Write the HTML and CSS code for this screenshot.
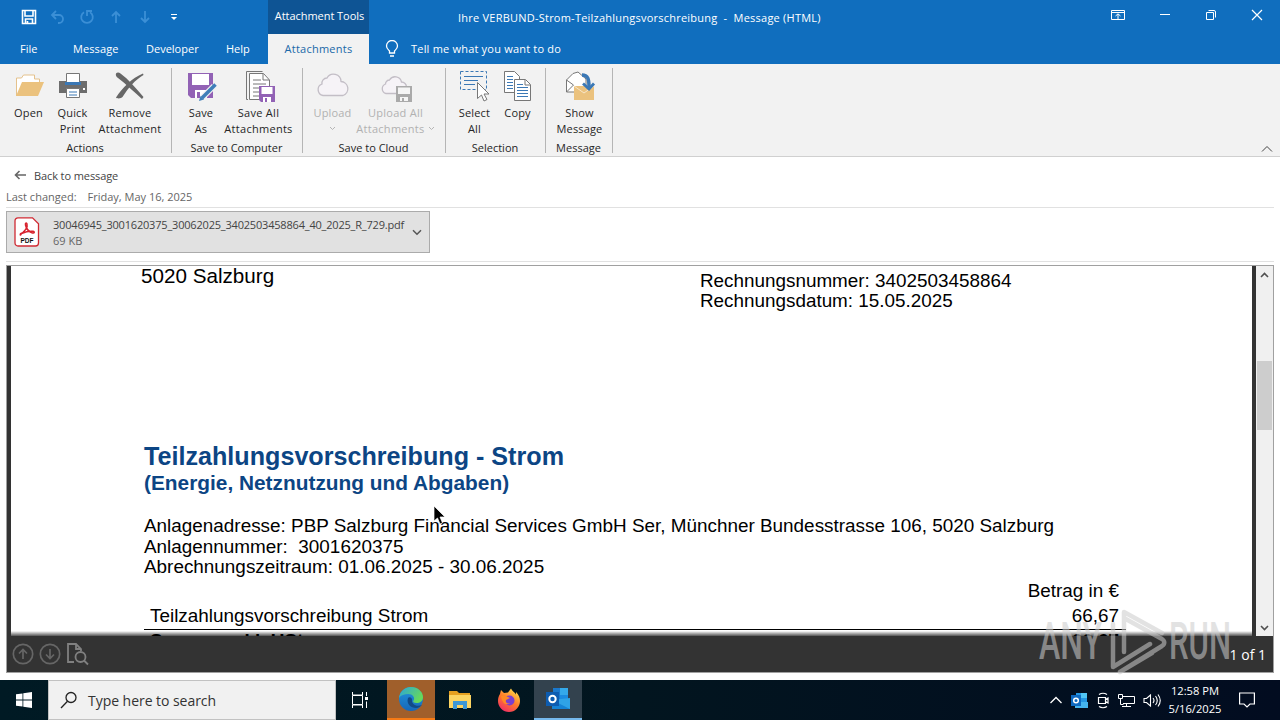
FILE: index.html
```html
<!DOCTYPE html>
<html lang="en">
<head>
    <meta charset="UTF-8">
    <meta name="viewport" content="width=device-width, initial-scale=1.0">
    <title>Ihre VERBUND-Strom-Teilzahlungsvorschreibung - Message (HTML)</title>
    <link rel="stylesheet" href="styles.css">
</head>
<body>
    <!-- Title bar and tabs -->
    <header class="top">
        <div class="top-left">
            <div class="quick-access">
                <svg width="16" height="16" viewBox="0 0 16 16"><path d="M1.5 1.5h13v13h-13zM4 2v5h8V2M4.5 14v-4h7v4M6.5 12v2" fill="none" stroke="#fff" stroke-width="1.6"/></svg>
                <svg width="16" height="16" viewBox="0 0 16 16"><path d="M6 2L2 6l4 4M2 6h7a4 4 0 0 1 0 8H8" fill="none" stroke="#3b8fd6" stroke-width="1.8"/></svg>
                <svg width="16" height="16" viewBox="0 0 16 16"><path d="M5 3.2a5.800 5.800 0 1 0 6 0M8 7V2h5" fill="none" stroke="#3b8fd6" stroke-width="1.8"/></svg>
                <svg width="16" height="16" viewBox="0 0 16 16"><path d="M8 14V3M4 7l4-4 4 4" fill="none" stroke="#3b8fd6" stroke-width="1.8"/></svg>
                <svg width="16" height="16" viewBox="0 0 16 16"><path d="M8 2v11M4 9l4 4 4-4" fill="none" stroke="#3b8fd6" stroke-width="1.8"/></svg>
                <svg width="16" height="16" viewBox="0 0 16 16"><path d="M5 5.500h6" stroke="#fff"/><path d="M5 8h6l-3 3z" fill="#fff"/></svg>
            </div>
            <nav class="tabs">
                <span class="tab tab-file">File</span>
                <span class="tab tab-message">Message</span>
                <span class="tab tab-developer">Developer</span>
                <span class="tab tab-help">Help</span>
            </nav>
        </div>
        <div class="context">
            <div class="context-title">Attachment Tools</div>
            <div class="context-tab">Attachments</div>
        </div>
        <div class="top-right">
            <div class="title-row">
                <h1 class="window-title">Ihre VERBUND-Strom-Teilzahlungsvorschreibung&nbsp; -&nbsp; Message (HTML)</h1>
                <div class="window-buttons">
                    <svg width="14" height="12" viewBox="0 0 14 12"><path d="M.5 1.500h13v9H.5zM.5 3.500h13M7 10V5M4.500 7L7 4.800 9.500 7" fill="none" stroke="#fff"/></svg>
                    <svg width="12" height="12" viewBox="0 0 12 12"><path d="M1 5.500h10" stroke="#fff"/></svg>
                    <svg width="12" height="12" viewBox="0 0 12 12"><path d="M1.500 3.500h7v7h-7zM3.500 1.500h5.500a1.500 1.500 0 0 1 1.500 1.500v5.500" fill="none" stroke="#fff"/></svg>
                    <svg width="12" height="12" viewBox="0 0 12 12"><path d="M1 1l10 10M11 1L1 11" stroke="#fff" stroke-width="1.200"/></svg>
                </div>
            </div>
            <div class="tell-me">
                <svg width="14" height="18" viewBox="0 0 14 18"><path d="M4.500 13v-2C3 9.500 1.500 8.500 1.500 6a5.500 5.500 0 0 1 11 0c0 2.500-1.500 3.500-3 5v2zM5 16h4" fill="none" stroke="#fff" stroke-width="1.300"/></svg>
                <span>Tell me what you want to do</span>
            </div>
        </div>
    </header>

    <!-- Ribbon -->
    <section class="ribbon">
        <div class="group g-actions">
            <div class="group-buttons">
                <div class="btn">
                    <svg width="32" height="36" viewBox="0 0 32 36"><path d="M3.500 28V10h5l2-3h11v4h5v4" fill="#fff" stroke="#e5c28c"/><path d="M3 28l6-14h22l-6 14z" fill="#ebc27e"/></svg>
                    <span>Open</span>
                </div>
                <div class="btn">
                    <svg width="32" height="36" viewBox="0 0 32 36"><path d="M2 13h28v12H2z" fill="#6d6d6d"/><path d="M9.500 5.500h13v9h-13z" fill="#fff" stroke="#777"/><path d="M8 14h16v3H8z" fill="#3b78b5"/><path d="M9.500 20.500h13v9h-13z" fill="#fff" stroke="#777"/><path d="M12 24h8M12 27h8" stroke="#3b78b5"/><path d="M26 21h2" stroke="#fff" stroke-width="2"/></svg>
                    <span>Quick<br>Print</span>
                </div>
                <div class="btn wide">
                    <svg width="32" height="36" viewBox="0 0 32 36"><path d="M2 5.500C3 4 5 4 6.500 5.500c8 6 15 14 23 23.500l-1.500 2C20 24 12 16 4 10 2 8.500 1.500 7 2 5.500z" fill="#676767"/><path d="M29.500 7C21 12 15 19 8.500 29c-1 1.500-5.500 2-6.500.5C8 20 18 10 29 5.500z" fill="#676767"/></svg>
                    <span>Remove<br>Attachment</span>
                </div>
            </div>
            <div class="group-label">Actions</div>
        </div>
        <div class="group g-computer">
            <div class="group-buttons">
                <div class="btn">
                    <svg width="32" height="36" viewBox="0 0 32 36"><path d="M3 5h25v25H6l-3-3z" fill="#9262b5"/><path d="M7 6h17v11H7zM10 22h12v8H10z" fill="#fff"/><path d="M12 24h3v6h-3z" fill="#9262b5"/><path d="M17 30l12-12" stroke="#f2f2f2" stroke-width="6"/><path d="M17 30l13.500-13.500" stroke="#3f7fb9" stroke-width="3.500"/><path d="M14 33l1.500-5 3.500 3.500z" fill="#3f7fb9"/></svg>
                    <span>Save<br>As</span>
                </div>
                <div class="btn wide">
                    <svg width="32" height="36" viewBox="0 0 32 36"><path d="M5 31.500H3.500v-28h16" fill="none" stroke="#777"/><path d="M6.500 5.500v26h20V12l-6-6.500h-14zM20 6v6h6" fill="#fff" stroke="#777"/><path d="M10 12h8M10 16h13M10 20h6M10 24h6M10 28h6" stroke="#777"/><path d="M16 18h16v16H18l-2-2z" fill="#9262b5"/><path d="M18.500 19h11v7h-11zM20 29h8v5h-8z" fill="#fff"/><path d="M22 30h2v4h-2z" fill="#9262b5"/></svg>
                    <span>Save All<br>Attachments</span>
                </div>
            </div>
            <div class="group-label">Save to Computer</div>
        </div>
        <div class="group g-cloud">
            <div class="group-buttons">
                <div class="btn off">
                    <svg width="32" height="36" viewBox="0 0 32 36"><path d="M6 27.500a6 6 0 0 1-1-11.500 5 5 0 0 1 5-6 7.500 7.500 0 0 1 14 3.500 7.200 7.200 0 0 1 2 14z" fill="#f6f3f7" stroke="#c3bec6" stroke-width="1.300"/></svg>
                    <span>Upload<br><svg class="caret" width="7" height="5" viewBox="0 0 7 5"><path d="M1 1l2.500 2.500L6 1" fill="none" stroke="#b5b5b5"/></svg></span>
                </div>
                <div class="btn wide off">
                    <svg width="32" height="36" viewBox="0 0 32 36"><path d="M6 25.500a5 5 0 0 1-.5-9.500 4 4 0 0 1 4-4 6.500 6.500 0 0 1 12 2 5 5 0 0 1 5 5v6.500z" fill="#f6f3f7" stroke="#c3bec6" stroke-width="1.300"/><path d="M16 18h16v16H16z" fill="#aaa"/><path d="M18 19.500h12V26H18zM20 29h8v4h-8z" fill="#f5f5f5"/><path d="M22 30h2v3h-2z" fill="#aaa"/></svg>
                    <span>Upload All<br>Attachments <svg class="caret" width="7" height="5" viewBox="0 0 7 5"><path d="M1 1l2.500 2.500L6 1" fill="none" stroke="#b5b5b5"/></svg></span>
                </div>
            </div>
            <div class="group-label">Save to Cloud</div>
        </div>
        <div class="group g-selection">
            <div class="group-buttons">
                <div class="btn">
                    <svg width="32" height="36" viewBox="0 0 32 36"><path d="M1.500 3.500h26v18h-26z" fill="none" stroke="#3b78b5" stroke-dasharray="3 2"/><path d="M5 8.500h19M5 12.500h14M5 16.500h11" stroke="#3b78b5"/><path d="M18.500 14.500v16l4-3.500 2.500 6 3-1.500-3-5.500h5z" fill="#fff" stroke="#777"/></svg>
                    <span>Select<br>All</span>
                </div>
                <div class="btn">
                    <svg width="32" height="36" viewBox="0 0 32 36"><g fill="#fff" stroke="#777"><path d="M2.500 3.500h10l5 5v16h-15z"/><path d="M12.500 11.500h11l5 5v16h-16z"/><path d="M23 12v5h5" fill="none"/></g><path d="M5 8.500h6M5 11.500h6M5 14.500h6M5 17.500h6M5 20.500h6M15 16.500h6M15 19.500h11M15 22.500h11M15 25.500h11M15 28.500h11" stroke="#3b78b5"/></svg>
                    <span>Copy</span>
                </div>
            </div>
            <div class="group-label">Selection</div>
        </div>
        <div class="group g-message">
            <div class="group-buttons">
                <div class="btn">
                    <svg width="32" height="36" viewBox="0 0 32 36"><path d="M2.500 24V12L9 5.500l5-1.500 8 7v13z" fill="#fff" stroke="#777"/><path d="M2.500 12l7 5M2.500 24l7-7" fill="none" stroke="#777"/><path d="M10 18h20v14H10z" fill="#ebc27e"/><path d="M10 18l10 7 10-7" fill="none" stroke="#f8e7c9"/><path d="M18 7c6 0 7 4 7 12" fill="none" stroke="#3b78b5" stroke-width="3.500"/><path d="M19 15.500l6 5.500 5-5.500" fill="none" stroke="#3b78b5" stroke-width="2.800"/></svg>
                    <span>Show<br>Message</span>
                </div>
            </div>
            <div class="group-label">Message</div>
        </div>
        <svg class="collapse" width="12" height="8" viewBox="0 0 12 8"><path d="M1 6.500l5-5 5 5" fill="none" stroke="#444"/></svg>
    </section>

    <!-- Attachment info -->
    <section class="info">
        <div class="back">
            <svg width="13" height="10" viewBox="0 0 13 10"><path d="M1.500 5H12M5.500 1l-4 4 4 4" fill="none" stroke="#666" stroke-width="1.600"/></svg>
            <span>Back to message</span>
        </div>
        <div class="changed"><span>Last changed:</span><span>Friday, May 16, 2025</span></div>
        <div class="chip-row">
            <div class="chip">
                <svg width="26" height="30" viewBox="0 0 26 30"><path d="M4 .8h14.500l6 6V26a3 3 0 0 1-3 3H4a3 3 0 0 1-3-3V4a3 3 0 0 1 3-3.200z" fill="#fff" stroke="#cf2a33" stroke-width="1.300"/><path d="M6 17c5-2 8-7 7-10-.6-1.600-2-1-1.500 1 .8 4 4 7 7 8 2 .5 2.500-1.500.5-1.700-4-.4-8 .7-11.500 2.200-2 1-1.500 2 0 1" fill="none" stroke="#d8232e" stroke-width="1.500"/><text x="13" y="26" class="pdf-tag">PDF</text></svg>
                <div class="chip-text">
                    <div class="file-name">30046945_3001620375_30062025_3402503458864_40_2025_R_729.pdf</div>
                    <div class="file-size">69 KB</div>
                </div>
                <svg width="10" height="7" viewBox="0 0 10 7"><path d="M1 1.200l4 4 4-4" fill="none" stroke="#555" stroke-width="1.500"/></svg>
            </div>
        </div>
    </section>

    <!-- PDF preview -->
    <main class="viewer">
        <div class="viewer-main">
            <article class="page">
                <div class="page-head">
                    <p class="city">5020 Salzburg</p>
                    <p class="invoice">Rechnungsnummer: 3402503458864<br>Rechnungsdatum: 15.05.2025</p>
                </div>
                <h2>Teilzahlungsvorschreibung - Strom</h2>
                <h3>(Energie, Netznutzung und Abgaben)</h3>
                <p class="details">Anlagenadresse: PBP Salzburg Financial Services GmbH Ser, Münchner Bundesstrasse 106, 5020 Salzburg<br>Anlagennummer:&nbsp; 3001620375<br>Abrechnungszeitraum: 01.06.2025 - 30.06.2025</p>
                <div class="sums">
                    <div class="sum-row sum-head"><span></span><span>Betrag in €</span></div>
                    <div class="sum-row"><span>Teilzahlungsvorschreibung Strom</span><span>66,67</span></div>
                    <div class="sum-row total"><span>Summe exkl. USt</span><span>66,67</span></div>
                </div>
            </article>
            <div class="scrollbar">
                <svg width="9" height="6" viewBox="0 0 9 6"><path d="M1 5l3.500-3.500L8 5" fill="none" stroke="#505050" stroke-width="1.600"/></svg>
                <div class="thumb"></div>
                <svg width="9" height="6" viewBox="0 0 9 6"><path d="M1 1l3.500 3.500L8 1" fill="none" stroke="#505050" stroke-width="1.600"/></svg>
            </div>
        </div>
        <div class="viewer-bar">
            <svg width="22" height="22" viewBox="0 0 22 22"><g fill="none" stroke="#666" stroke-width="1.700"><circle cx="11" cy="11" r="9.700"/><path d="M11 16V6.500M7 10.500l4-4 4 4"/></g></svg>
            <svg width="22" height="22" viewBox="0 0 22 22"><g fill="none" stroke="#666" stroke-width="1.700"><circle cx="11" cy="11" r="9.700"/><path d="M11 6v9.500M7 11.500l4 4 4-4"/></g></svg>
            <svg width="24" height="24" viewBox="0 0 24 24"><g fill="none" stroke="#808080" stroke-width="1.800"><path d="M8 20H2V2h8l5 5v2M10 2v5h5"/><circle cx="14.500" cy="15" r="5"/><path d="M18 18.500l4 4"/></g></svg>
            <span class="page-count">1 of 1</span>
        </div>
    </main>

    <!-- Taskbar -->
    <footer class="taskbar">
        <div class="start">
            <svg width="16" height="16" viewBox="0 0 16 16"><path d="M0 2.300l6.500-.9v6.100H0zM7.300 1.300L16 0v7.500H7.300zM0 8.400h6.500v6.200L0 13.700zM7.300 8.400H16V16l-8.700-1.300z" fill="#fff"/></svg>
        </div>
        <div class="search">
            <svg width="18" height="18" viewBox="0 0 18 18"><g fill="none" stroke="#222" stroke-width="1.300"><circle cx="11" cy="6.500" r="5"/><path d="M7.500 10.200L1 17"/></g></svg>
            <span>Type here to search</span>
        </div>
        <div class="task task-view">
            <svg width="18" height="18" viewBox="0 0 18 18"><path d="M2.500 1v3h10V1M2.500 17v-3h10v3M2.500 4.500h10v9h-10zM16.500 1v4M16.500 10.500V17" fill="none" stroke="#fff"/><path d="M15 6h3v3h-3z" fill="#fff"/></svg>
        </div>
        <div class="task edge">
            <svg width="26" height="26" viewBox="0 0 26 26">
                <defs>
                    <linearGradient id="edge-top" x1="0" y1="0" x2="1" y2="0.500"><stop offset="0" stop-color="#2aa5dc"/><stop offset="1" stop-color="#66d95a"/></linearGradient>
                    <linearGradient id="edge-side" x1="0" y1="0" x2="0" y2="1"><stop offset="0" stop-color="#2296dd"/><stop offset="1" stop-color="#1767b8"/></linearGradient>
                </defs>
                <circle cx="13" cy="13" r="12" fill="url(#edge-side)"/>
                <path d="M1 12C2 5 7 1 13 1c7 0 12 5 12 10 0 4-3 6-6.500 6-3 0-4-1.200-3-2.500 2-3-1-6.500-5-6.500C6 8 3 9 1 12z" fill="url(#edge-top)"/>
                <path d="M10 12c-2 6 3 10 8 10 3 0 4.500-1.500 6-3-5 2-11 0-10-6-1-2-3-2.500-4-1z" fill="#124a86"/>
            </svg>
        </div>
        <div class="task">
            <svg width="22" height="20" viewBox="0 0 22 20"><path d="M0 1h8l2 2h11v4H0z" fill="#e6a020"/><path d="M0 5h22v13H0z" fill="#fcd462"/><path d="M4 11h14v8h-4v-4H8v4H4z" fill="#3c97d6"/></svg>
        </div>
        <div class="task">
            <svg width="24" height="24" viewBox="0 0 24 24">
                <defs><linearGradient id="fox" x1="0.800" y1="0" x2="0.200" y2="1"><stop offset="0" stop-color="#ffe14a"/><stop offset="0.500" stop-color="#ff7a2a"/><stop offset="1" stop-color="#f0286a"/></linearGradient></defs>
                <path d="M3 6l1-4 3 3 4-.5L14 .5c1 3 4 3.500 5 6V4c3 3 4 6 4 9a11 11 0 0 1-22 0c0-3 .7-5 2-7z" fill="url(#fox)"/>
                <circle cx="12.500" cy="12.500" r="5" fill="#7a3fd0"/>
                <path d="M4 8c3-1 5 0 7 1l2 1-4 2c-1 3 2 4 4 3-3 3-8 1-9-7z" fill="#ff8a24"/>
            </svg>
        </div>
        <div class="task outlook">
            <svg width="26" height="24" viewBox="0 0 26 24"><path d="M8 1h15v14H8z" fill="#1a78cc"/><path d="M15 1h8v7h-8z" fill="#34a9ea"/><path d="M15 8h8v7h-8z" fill="#1b8be0"/><path d="M7 13l18-2v11H7z" fill="#2fa3e6"/><path d="M7 13l18 9H7z" fill="#1583d5"/><path d="M1 5h13v14H1z" fill="#0d5cb0"/><circle cx="7.500" cy="12" r="3.200" fill="none" stroke="#fff" stroke-width="2"/></svg>
        </div>
        <div class="tray">
            <svg width="14" height="8" viewBox="0 0 14 8"><path d="M1.500 7L7 1.500 12.500 7" fill="none" stroke="#fff" stroke-width="1.300"/></svg>
            <svg width="17" height="17" viewBox="0 0 17 17"><path d="M5 1h11v14H5z" fill="#2496e2"/><path d="M10 1h6v5h-6z" fill="#50c5f4"/><path d="M4 10h13v6H4z" fill="#45b4ee"/><path d="M0 3h10v11H0z" fill="#0f69bf"/><circle cx="5" cy="8.500" r="2.300" fill="none" stroke="#fff" stroke-width="1.500"/></svg>
            <svg width="14" height="17" viewBox="0 0 14 17"><path d="M2.500 5.500h7v6h-7zM9.500 7.500l2.500-1.500v5l-2.500-1.500M3 2.500q4-2.500 8 0M3 14.500q4 2.500 8 0" fill="none" stroke="#fff" stroke-width="1.200"/></svg>
            <svg width="17" height="15" viewBox="0 0 17 15"><path d="M5 3.500h11.500v7H5M4 13.500h9M8.500 10.500v3M.5 1.500h4v4h-4zM2.500 5.500v6h3" fill="none" stroke="#fff"/></svg>
            <svg width="18" height="15" viewBox="0 0 18 15"><path d="M1 5.500h2.500l4-3.500v11l-4-3.500H1zM10 5q2 2.500 0 5M12.500 3q3.500 4.500 0 9M15 1.500q4.500 6 0 12" fill="none" stroke="#fff" stroke-width="1.100"/></svg>
            <div class="clock">12:58 PM<br>5/16/2025</div>
            <svg class="notice" width="16" height="16" viewBox="0 0 16 16"><path d="M.6 1h14.800v11H11l-3 3-3-3H.6z" fill="none" stroke="#fff" stroke-width="1.200"/></svg>
        </div>
    </footer>

    <!-- Watermark over the viewer -->
    <svg class="watermark" width="200" height="70" viewBox="0 0 200 70">
        <text x="1" y="53" textLength="63" lengthAdjust="spacingAndGlyphs">ANY</text>
        <text x="131" y="53" textLength="62" lengthAdjust="spacingAndGlyphs">RUN</text>
        <path d="M86 46V6l38 21M75 18v43l37-23M75 61V18M86 26v20M82 66l42-26c3-2 3-5 0-7L86 12M82 66l32-19" fill="none" stroke="#ccc" stroke-width="4.500" stroke-linejoin="round" stroke-linecap="round"/>
    </svg>

    <!-- Mouse pointer -->
    <svg class="pointer" width="13" height="20" viewBox="0 0 13 20"><path d="M1 1v15l3.500-3 2.500 6 2.500-1-2.500-6h5z" fill="#000" stroke="#fff" stroke-width=".7"/></svg>
</body>
</html>
```
FILE: styles.css
```css
/* Global Styles */
* {
    box-sizing: border-box;
}

body {
    margin: 0;
    width: 1280px;
    height: 720px;
    overflow: hidden;
    position: relative;
    display: flex;
    flex-direction: column;
    background: #fff;
    color: #262626;
    font-family: 'Open Sans', sans-serif;
    font-size: 11px;
}

svg {
    display: block;
    flex-shrink: 0;
}

h1, h2, h3, p {
    margin: 0;
}

/* Title bar and tabs */
.top {
    display: flex;
    height: 64px;
    background: #106ebe;
    color: #fff;
}

.top-left {
    width: 268px;
}

.quick-access {
    display: flex;
    gap: 13px;
    height: 34px;
    padding-left: 21px;
    align-items: center;
}

.tabs {
    display: flex;
    height: 30px;
    line-height: 30px;
    padding-left: 20px;
}

.tab-file { width: 53px; }
.tab-message { width: 73px; letter-spacing: 0.1px; }
.tab-developer { width: 80px; }

.context {
    width: 101px;
    text-align: center;
}

.context-title {
    height: 34px;
    line-height: 32px;
    padding-left: 2px;
    background: #0e5494;
    letter-spacing: -0.05px;
    white-space: nowrap;
}

.context-tab {
    height: 30px;
    line-height: 30px;
    background: #f2f2f2;
    color: #2068a8;
    letter-spacing: 0.25px;
}

.top-right {
    flex: 1;
}

.title-row {
    display: flex;
    justify-content: space-between;
    height: 34px;
    padding: 0 17px 0 89px;
}

.window-title {
    font-size: 11px;
    font-weight: normal;
    letter-spacing: 0.23px;
    line-height: 36px;
}

.window-buttons {
    display: flex;
    gap: 34px;
    padding-top: 9px;
}

.tell-me {
    display: flex;
    align-items: center;
    gap: 12px;
    height: 29px;
    padding-left: 16px;
    letter-spacing: 0.2px;
}

/* Ribbon */
.ribbon {
    display: flex;
    height: 93px;
    background: #f2f2f2;
    border-bottom: 1px solid #d0d0d0;
    position: relative;
}

.group {
    height: 92px;
    padding-top: 4px;
    background: linear-gradient(#b5b5b5, #b5b5b5) right 4px / 1px 85px no-repeat;
}

.g-actions { width: 172px; }
.g-computer { width: 131px; }
.g-cloud { width: 143px; }
.g-selection { width: 100px; }
.g-message { width: 67px; }

.group-buttons {
    display: flex;
    justify-content: center;
    height: 72px;
    padding-right: 2px;
}

.g-actions .group-buttons,
.g-selection .group-buttons,
.g-message .group-buttons {
    padding-right: 0;
}

.btn {
    width: 44px;
    display: flex;
    flex-direction: column;
    align-items: center;
    line-height: 16px;
    text-align: center;
    white-space: nowrap;
}

.btn > span {
    padding-top: 1px;
    letter-spacing: 0.15px;
}

.btn.wide {
    width: 71px;
}

.btn.wide > span {
    letter-spacing: 0.28px;
}

.g-cloud .wide {
    width: 82px;
}

.g-selection .btn {
    width: 43px;
}

.off {
    color: #b1b1b1;
}

.caret {
    display: inline-block;
    vertical-align: 2px;
}

.group-label {
    padding-right: 2px;
    text-align: center;
    line-height: 16px;
}

.collapse {
    position: absolute;
    right: 7px;
    bottom: 3px;
}

/* Attachment info */
.info {
    height: 105px;
    padding: 8px 6px 0;
    color: #444;
}

.back {
    display: flex;
    align-items: center;
    gap: 7px;
    height: 20px;
    margin-bottom: 2px;
    padding-left: 8px;
    letter-spacing: -0.1px;
}

.changed {
    display: flex;
    gap: 11px;
    height: 21px;
    line-height: 20px;
    color: #666;
    border-bottom: 1px solid #e1e1e1;
}

.chip-row {
    padding: 3px 0 8px;
    border-bottom: 1px solid #e1e1e1;
}

.chip {
    display: flex;
    align-items: center;
    width: 424px;
    height: 42px;
    padding: 0 7px;
    background: #e1e1e1;
    border: 1px solid #ababab;
}

.chip-text {
    flex: 1;
    width: 0;
    padding: 1px 0 0 13px;
    line-height: 16px;
    white-space: nowrap;
}

.file-name {
    letter-spacing: -0.19px;
}

.file-size {
    color: #666;
}

.pdf-tag {
    font: bold 6.5px 'Liberation Sans', sans-serif;
    text-anchor: middle;
    fill: #111;
}

/* PDF preview */
.viewer {
    height: 408px;
    margin: 3px 6px 7px;
    border: 1px solid #a0a0a0;
    background: #333;
}

.viewer-main {
    display: flex;
    height: 370px;
    padding-left: 4px;
}

.page {
    width: 1241px;
    height: 370px;
    margin-right: 4px;
    padding-left: 133px;
    overflow: hidden;
    background: linear-gradient(#fff 365px, #555 370px);
    color: #000;
    font-family: 'Liberation Sans', sans-serif;
    font-size: 18.9px;
    line-height: 20.5px;
    white-space: nowrap;
}

.page-head {
    display: flex;
    height: 176px;
    margin-left: -3px;
}

.city {
    width: 559px;
    font-size: 20.65px;
}

.invoice {
    padding-top: 5px;
    font-size: 18.87px;
    line-height: 20px;
}

.page h2 {
    font-size: 25.15px;
    line-height: 28px;
    color: #0c4584;
}

.page h3 {
    font-size: 20.85px;
    line-height: 25px;
    color: #0c4584;
}

.details {
    padding-top: 21px;
}

.sums {
    width: 982px;
}

.sum-row {
    display: flex;
    justify-content: space-between;
    height: 26px;
    line-height: 23px;
    padding: 0 7px 0 6px;
}

.sum-row.sum-head {
    line-height: 26px;
}

.sum-row + .sum-row {
    border-bottom: 1px solid #000;
}

.sum-row.total {
    border-bottom: 0;
    font-weight: bold;
    line-height: 21px;
}

.scrollbar {
    display: flex;
    flex-direction: column;
    align-items: center;
    width: 17px;
    padding: 6px 0 5px;
    background: #f0f0f0;
}

.thumb {
    width: 15px;
    height: 69px;
    margin: 83px 0 auto;
    background: #cdcdcd;
}

.viewer-bar {
    display: flex;
    align-items: center;
    gap: 5px;
    height: 36px;
    padding: 0 7px 0 5px;
}

.page-count {
    margin-left: auto;
    font-size: 14px;
    color: #fff;
}

/* Taskbar */
.taskbar {
    display: flex;
    height: 40px;
    background: linear-gradient(90deg, #001a24 0, #02151f 50%, #020c20 100%);
    color: #fff;
}

.start {
    display: grid;
    place-items: center;
    width: 48px;
}

.search {
    display: flex;
    align-items: center;
    gap: 10px;
    width: 288px;
    padding-left: 11px;
    background: #f1f1f1;
    border: 1px solid #c2c2c2;
    color: #333;
    font-size: 14px;
    letter-spacing: -0.04px;
}

.task {
    display: grid;
    place-items: center;
    width: 49px;
}

.task-view {
    padding-right: 3px;
}

.edge {
    width: 48px;
    margin-left: 2px;
    background: #a05f2b;
    border-bottom: 2px solid #f57a15;
}

.outlook {
    width: 48px;
    margin-left: 1px;
    background: #33424e;
    border-bottom: 2px solid #76b9ed;
}

.tray {
    display: flex;
    align-items: center;
    gap: 8px;
    margin-left: auto;
    padding-right: 25px;
}

.clock {
    width: 54px;
    margin-left: -1px;
    text-align: center;
    font-size: 11.2px;
    line-height: 18px;
}

.notice {
    margin-left: 9px;
}

/* Overlays */
.watermark {
    position: absolute;
    left: 1038px;
    top: 606px;
    opacity: 0.55;
}

.watermark text {
    font: 500 51px Roboto, sans-serif;
    fill: #ccc;
}

.pointer {
    position: absolute;
    left: 433px;
    top: 505px;
}
```
